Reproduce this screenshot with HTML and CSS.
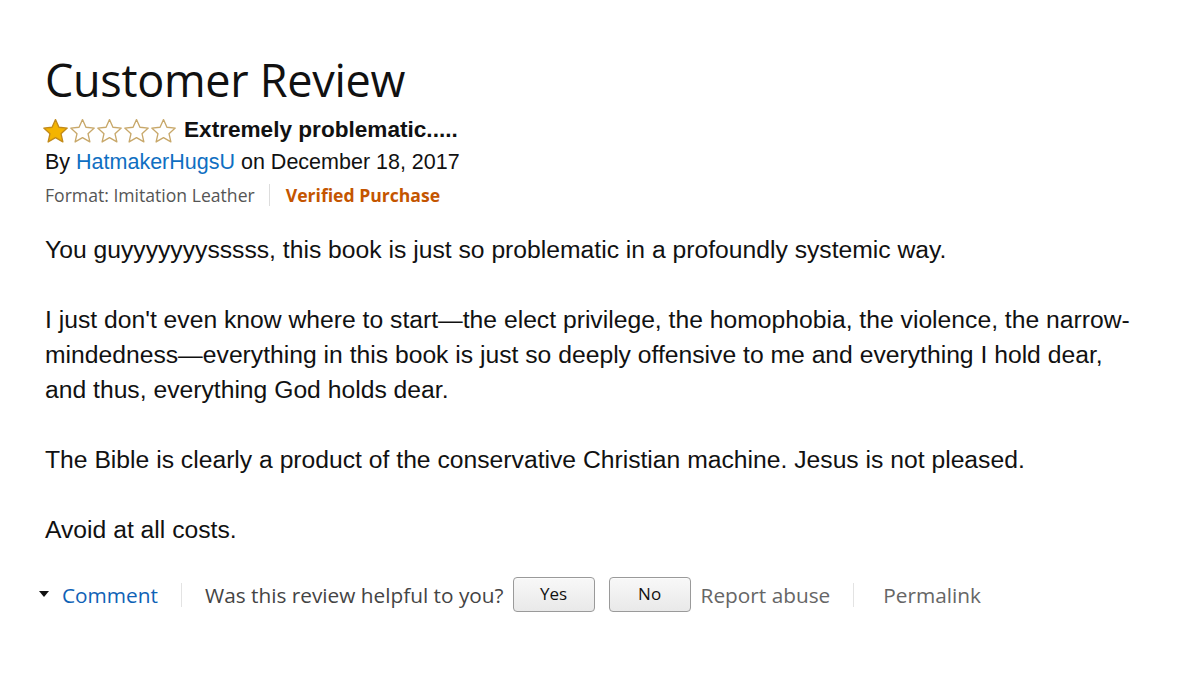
FILE: index.html
```html
<!DOCTYPE html>
<html>
<head>
<meta charset="utf-8">
<link rel="stylesheet" href="styles.css">
</head>
<body>
<div class="review">
  <h1 class="title">Customer Review</h1>
  <div class="rating-row">
    <span class="stars">
      <svg class="star" viewBox="0 0 26 24"><path d="M13 1.5l3.3 7.4 8 .8-6 5.4 1.8 7.9L13 18.9 5.9 23l1.8-7.9-6-5.4 8-.8z" fill="#f4b400" stroke="#c28a1a" stroke-width="1.3" stroke-linejoin="round"/></svg>
      <svg class="star" viewBox="0 0 26 24"><path d="M13 1.5l3.3 7.4 8 .8-6 5.4 1.8 7.9L13 18.9 5.9 23l1.8-7.9-6-5.4 8-.8z" fill="#fff" stroke="#c8a86a" stroke-width="1.3" stroke-linejoin="round"/></svg>
      <svg class="star" viewBox="0 0 26 24"><path d="M13 1.5l3.3 7.4 8 .8-6 5.4 1.8 7.9L13 18.9 5.9 23l1.8-7.9-6-5.4 8-.8z" fill="#fff" stroke="#c8a86a" stroke-width="1.3" stroke-linejoin="round"/></svg>
      <svg class="star" viewBox="0 0 26 24"><path d="M13 1.5l3.3 7.4 8 .8-6 5.4 1.8 7.9L13 18.9 5.9 23l1.8-7.9-6-5.4 8-.8z" fill="#fff" stroke="#c8a86a" stroke-width="1.3" stroke-linejoin="round"/></svg>
      <svg class="star" viewBox="0 0 26 24"><path d="M13 1.5l3.3 7.4 8 .8-6 5.4 1.8 7.9L13 18.9 5.9 23l1.8-7.9-6-5.4 8-.8z" fill="#fff" stroke="#c8a86a" stroke-width="1.3" stroke-linejoin="round"/></svg>
    </span>
    <span class="review-title">Extremely problematic.....</span>
  </div>
  <div class="byline">By <a class="author">HatmakerHugsU</a> on December 18, 2017</div>
  <div class="meta">
    <span class="format">Format: Imitation Leather</span>
    <span class="divider"></span>
    <span class="verified">Verified Purchase</span>
  </div>
  <div class="body">
    <p>You guyyyyyyysssss, this book is just so problematic in a profoundly systemic way.</p>
    <p>I just don't even know where to start—the elect privilege, the homophobia, the violence, the narrow-mindedness—everything in this book is just so deeply offensive to me and everything I hold dear, and thus, everything God holds dear.</p>
    <p>The Bible is clearly a product of the conservative Christian machine. Jesus is not pleased.</p>
    <p>Avoid at all costs.</p>
  </div>
  <div class="actions">
    <span class="caret"></span>
    <a class="comment">Comment</a>
    <span class="divider tall"></span>
    <span class="helpful">Was this review helpful to you?</span>
    <button class="btn btn-yes">Yes</button>
    <button class="btn btn-no">No</button>
    <span class="link-grey report">Report abuse</span>
    <span class="divider tall"></span>
    <span class="link-grey permalink">Permalink</span>
  </div>
</div>
</body>
</html>
```

FILE: styles.css
```css
html, body {
  margin: 0;
  padding: 0;
  background: #ffffff;
}

.review {
  padding: 50px 0 0 45px;
  color: #111111;
}

.title {
  margin: 0;
  font-family: "Open Sans", "Noto Sans", sans-serif;
  font-weight: 400;
  font-size: 45px;
  line-height: 60px;
  color: #111111;
  letter-spacing: -0.3px;
}

.rating-row {
  display: flex;
  align-items: center;
  margin-top: 4px;
  height: 32px;
}

.stars {
  display: flex;
  margin-left: -3px;
}

.star {
  width: 27px;
  height: 25px;
  display: block;
}

.review-title {
  margin-left: 7px;
  font-family: "Liberation Sans", Arial, sans-serif;
  font-weight: 700;
  font-size: 22.6px;
  color: #111111;
}

.byline {
  margin-top: 1px;
  font-family: "Liberation Sans", Arial, sans-serif;
  font-size: 21.5px;
  line-height: 30px;
  color: #111111;
}

.author {
  color: #0f6fc2;
  text-decoration: none;
}

.meta {
  display: flex;
  align-items: center;
  margin-top: 5px;
  font-family: "Open Sans", "Noto Sans", sans-serif;
  font-size: 17.6px;
  line-height: 26px;
}

.format {
  color: #555555;
}

.divider {
  display: inline-block;
  width: 1px;
  height: 22px;
  background: #dddddd;
  margin: 0 16px 0 14px;
}

.verified {
  color: #c45500;
  font-weight: 700;
}

.body {
  margin-top: 24px;
  font-family: "Liberation Sans", Arial, sans-serif;
  font-size: 24.7px;
  line-height: 35px;
  color: #111111;
  width: 1090px;
}

.body p {
  margin: 0 0 35px 0;
}

.body p:last-child {
  margin-bottom: 0;
}

.actions {
  display: flex;
  align-items: center;
  margin-top: 30px;
  font-family: "Open Sans", "Noto Sans", sans-serif;
  font-size: 20.8px;
}

.caret {
  width: 0;
  height: 0;
  border-left: 5px solid transparent;
  border-right: 5px solid transparent;
  border-top: 6px solid #111111;
  margin: 0 13px 2px -6px;
}

.comment {
  color: #0f62b6;
  text-decoration: none;
}

.divider.tall {
  height: 24px;
  background: #e3e3e3;
  margin: 0 23px 0 23px;
}

.helpful {
  color: #444444;
}

.btn {
  font-family: "Open Sans", "Noto Sans", sans-serif;
  font-size: 17px;
  color: #111111;
  background: linear-gradient(#f8f8f8, #e9e9e9);
  border: 1px solid #9a9a9a;
  border-radius: 4px;
  height: 35px;
  width: 82px;
  padding: 0 0 3px 0;
  box-shadow: 0 1px 0 rgba(255,255,255,0.6) inset;
}

.btn-yes {
  margin-left: 9px;
}

.btn-no {
  margin-left: 14px;
}

.link-grey {
  color: #666666;
}

.report {
  margin-left: 10px;
}

.permalink {
  margin-left: 6px;
}
```
